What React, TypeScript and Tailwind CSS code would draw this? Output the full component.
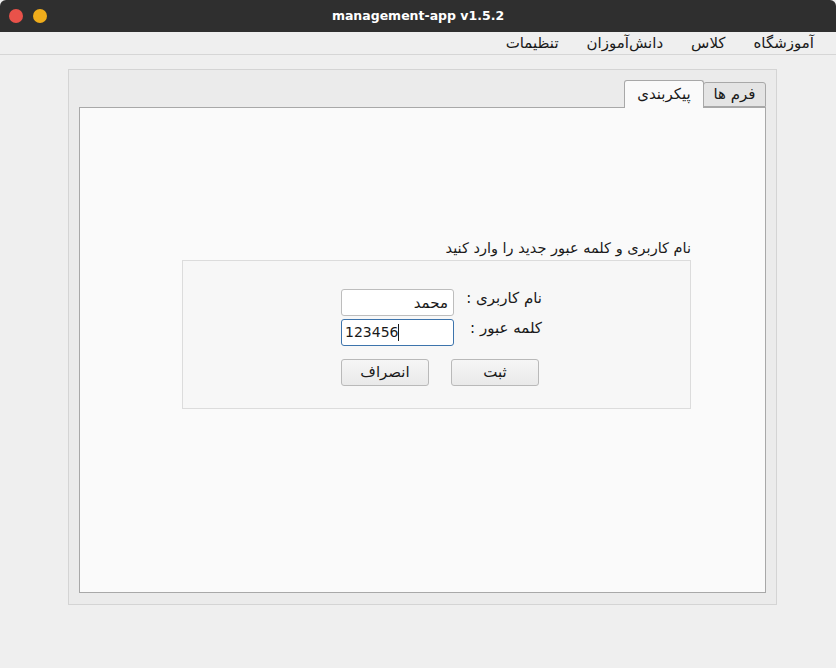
import React, { useState } from 'react';

const menuItems = ['آموزشگاه', 'کلاس', 'دانش‌آموزان', 'تنظیمات'];

export default function App() {
  const [activeTab, setActiveTab] = useState<'config' | 'forms'>('config');
  const [username, setUsername] = useState('محمد');
  const [password, setPassword] = useState('123456');

  return (
    <div
      className="w-[836px] h-[668px] bg-[#efefef] flex flex-col overflow-hidden text-[#1a1a1a]"
      style={{ fontFamily: '"DejaVu Sans", "Noto Sans", sans-serif' }}
    >
      {/* title bar */}
      <div className="h-8 bg-[#2f2f2f] flex items-center relative shrink-0 rounded-t-[6px]">
        <div className="flex items-center gap-[10px] pl-[9px]">
          <span className="w-[14px] h-[14px] rounded-full bg-[#e9524a]" />
          <span className="w-[14px] h-[14px] rounded-full bg-[#f0ad1b]" />
        </div>
        <div className="absolute inset-0 flex items-center justify-center text-white text-[12.5px] font-bold pointer-events-none">
          management-app v1.5.2
        </div>
      </div>

      {/* menu bar */}
      <div dir="rtl" className="h-[23px] flex items-center border-b border-[#d6d6d6] pr-[8px] text-[15px] shrink-0">
        {menuItems.map((m) => (
          <span key={m} className="px-[14px] leading-none">{m}</span>
        ))}
      </div>

      {/* group frame */}
      <div className="mt-[14px] ml-[68px] w-[709px] h-[536px] border border-[#d4d4d4] bg-[#ebebeb] flex flex-col px-[10px] pt-[10px]">
        {/* tabs */}
        <div dir="rtl" className="flex items-end h-[28px] text-[15px] relative z-10">
          <button
            onClick={() => setActiveTab('forms')}
            className={
              activeTab === 'forms'
                ? 'h-[28px] w-[63px] border border-b-0 border-[#a8a8a8] rounded-t-[3px] bg-[#fafafa]'
                : 'h-[25px] w-[63px] border border-[#a8a8a8] rounded-t-[3px] bg-[#e4e4e4] mb-[1px]'
            }
          >
            فرم ها
          </button>
          <button
            onClick={() => setActiveTab('config')}
            className={
              activeTab === 'config'
                ? 'h-[28px] w-[80px] border border-b-0 border-[#a8a8a8] rounded-t-[3px] bg-[#fafafa] -mr-px'
                : 'h-[25px] w-[80px] border border-[#a8a8a8] rounded-t-[3px] bg-[#e4e4e4] mb-[1px] -mr-px'
            }
          >
            پیکربندی
          </button>
        </div>

        {/* tab pane */}
        <div className="-mt-px h-[486px] border border-[#a8a8a8] bg-[#fafafa]">
          {activeTab === 'config' && (
            <div className="ml-[102px] w-[509px] pt-[130px]">
              <div dir="rtl" className="text-[14.5px] leading-[20px] mb-[2px]">
                نام کاربری و کلمه عبور جدید را وارد کنید
              </div>
              <div className="h-[149px] border border-[#dcdcdc] bg-[#f7f7f7] pt-[28px] pl-[158px]">
                <div className="flex flex-col gap-[3px]">
                  <div className="flex items-start">
                    <input
                      dir="rtl"
                      value={username}
                      onChange={(e) => setUsername(e.target.value)}
                      className="w-[113px] h-[27px] shrink-0 bg-white border border-[#bdbdbd] rounded-[3px] px-[5px] text-[15px] outline-none"
                    />
                    <span dir="rtl" className="ml-[12px] text-[15px] leading-[18px] w-[76px] shrink-0 whitespace-nowrap text-right">نام کاربری :</span>
                  </div>
                  <div className="flex items-start">
                    <div className="w-[113px] h-[27px] shrink-0 bg-white border border-[#3d74ac] rounded-[3px] pl-[3px] flex items-center">
                      <input
                        value={password}
                        onChange={(e) => setPassword(e.target.value)}
                        style={{ width: `${password.length * 8.7 + 2}px` }}
                        className="bg-transparent text-[14px] outline-none caret-transparent"
                      />
                      <span className="w-px h-[17px] bg-[#1a1a1a] -ml-[1px]" />
                    </div>
                    <span dir="rtl" className="ml-[12px] text-[15px] leading-[18px] w-[76px] shrink-0 whitespace-nowrap text-right">کلمه عبور :</span>
                  </div>
                </div>
                <div className="flex gap-[22px] mt-[13px]">
                  <button className="w-[88px] h-[27px] border border-[#b9b9b9] rounded-[3px] bg-gradient-to-b from-[#f6f6f6] to-[#e9e9e9] text-[15px]">
                    انصراف
                  </button>
                  <button className="w-[88px] h-[27px] border border-[#b9b9b9] rounded-[3px] bg-gradient-to-b from-[#f6f6f6] to-[#e9e9e9] text-[15px]">
                    ثبت
                  </button>
                </div>
              </div>
            </div>
          )}
        </div>
      </div>
    </div>
  );
}
